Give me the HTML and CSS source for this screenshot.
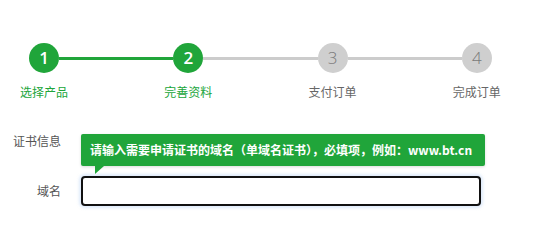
FILE: index.html
```html
<!DOCTYPE html>
<html lang="zh-CN">
<head>
<meta charset="utf-8">
<title>申请证书</title>
<link rel="stylesheet" href="styles.css">
</head>
<body>
<div class="page">
  <div class="steps">
    <div class="step done">
      <div class="track"><span class="line hidden"></span><span class="dot">1</span><span class="line on"></span></div>
      <div class="label">选择产品</div>
    </div>
    <div class="step done">
      <div class="track"><span class="line on"></span><span class="dot">2</span><span class="line"></span></div>
      <div class="label">完善资料</div>
    </div>
    <div class="step">
      <div class="track"><span class="line"></span><span class="dot">3</span><span class="line"></span></div>
      <div class="label">支付订单</div>
    </div>
    <div class="step">
      <div class="track"><span class="line"></span><span class="dot">4</span><span class="line hidden"></span></div>
      <div class="label">完成订单</div>
    </div>
  </div>

  <div class="form">
    <div class="row row-title">
      <div class="row-label">证书信息</div>
      <div class="row-body"></div>
    </div>
    <div class="row row-input">
      <div class="row-label">域名</div>
      <div class="row-body field">
        <input class="input" type="text">
        <div class="tips">请输入需要申请证书的域名（单域名证书），必填项，例如：www.bt.cn<i class="tips-arrow"></i></div>
      </div>
    </div>
  </div>
</div>
</body>
</html>
```
FILE: styles.css
```css
html, body {
  margin: 0;
  padding: 0;
  background: #fff;
}
body {
  font-family: "Noto Sans CJK SC", "Noto Sans", sans-serif;
  font-size: 12px;
  color: #555;
}
.page {
  width: 549px;
  height: 215px;
  overflow: hidden;
}
.steps {
  display: flex;
  padding-top: 43px;
  margin-left: -28px;
}
.step {
  width: 145px;
  display: flex;
  flex-direction: column;
  align-items: center;
}
.track {
  display: flex;
  align-items: center;
  width: 100%;
  height: 30px;
}
.line {
  flex: 1;
  height: 3px;
  background: #cccccc;
}
.line.on {
  background: #20a53a;
}
.line.hidden {
  visibility: hidden;
}
.dot {
  width: 30px;
  height: 30px;
  border-radius: 50%;
  background: #cfcfcf;
  color: #7a7a7a;
  font-family: "Open Sans", "Noto Sans", sans-serif;
  font-size: 17px;
  font-weight: 300;
  line-height: 30px;
  text-align: center;
}
.step.done .dot {
  background: #20a53a;
  color: #fff;
  font-weight: 600;
}
.label {
  margin-top: 10px;
  line-height: 18px;
  color: #666;
  font-size: 12px;
}
.step.done .label {
  color: #20a53a;
}
.form {
  margin-top: 30px;
}
.row {
  display: flex;
}
.row-label {
  width: 61px;
  text-align: right;
  margin-right: 20px;
  color: #555;
}
.row-title {
  height: 45px;
  line-height: 20px;
}
.row-input .row-label {
  line-height: 30px;
}
.field {
  position: relative;
}
.input {
  display: block;
  box-sizing: border-box;
  width: 400px;
  height: 30px;
  margin: 0;
  border: 2px solid #111;
  border-radius: 4px;
  outline: none;
  background: #fff;
  box-shadow: 0 0 3px 2px rgba(160, 195, 240, 0.35);
}
.tips {
  position: absolute;
  left: 0;
  bottom: calc(100% + 10px);
  width: 404px;
  box-sizing: border-box;
  padding: 0 9px;
  height: 32px;
  line-height: 32px;
  background: #20a53a;
  color: #fff;
  font-size: 12px;
  font-weight: 700;
  border-radius: 2px;
  white-space: nowrap;
  box-shadow: 0 1px 3px rgba(0, 0, 0, 0.15);
}
.tips-arrow {
  position: absolute;
  left: 14px;
  top: 100%;
  width: 0;
  height: 0;
  border-style: solid;
  border-width: 8px 9px 0 0;
  border-color: #20a53a transparent transparent transparent;
}
```
